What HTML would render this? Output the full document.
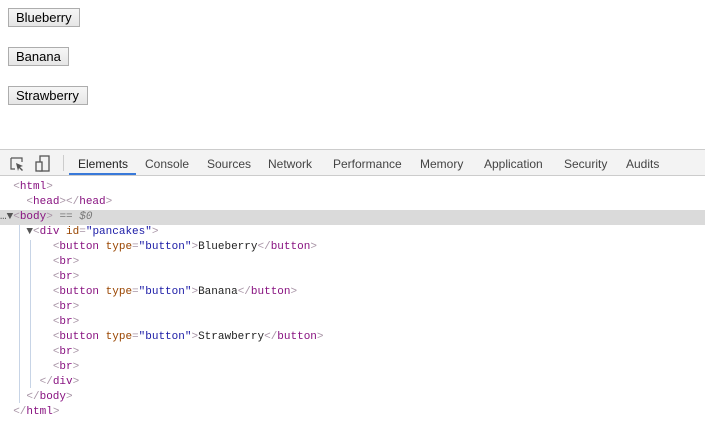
<!DOCTYPE html>
<html><head><style>
body{margin:0;width:705px;height:431px;overflow:hidden;background:#fff;font-family:"Liberation Sans",sans-serif;position:relative}
.b{position:absolute;left:8px;height:19px;box-sizing:border-box;border:1px solid #adadad;background:linear-gradient(#f6f6f6,#e6e6e6);font-size:13px;line-height:17px;padding:0 7px;color:#000}
.tb{position:absolute;left:0;top:149px;width:705px;height:27px;border-top:1px solid #ccc;border-bottom:1px solid #ccc;background:#f3f3f3;box-sizing:border-box}
.tab{position:absolute;top:7px;font-size:12px;color:#444}
.code{position:absolute;left:0;top:180px;width:705px;font-family:"Liberation Mono",monospace;font-size:11px;line-height:15px;color:#222}
.l{height:15px;white-space:pre;position:relative}
.t{color:#881280}.k{color:#a894a6}.a{color:#994500}.v{color:#1a1aa6}
.sel{background:#dadada}
</style></head><body>
<div class="b" style="top:8px;width:72px">Blueberry</div>
<div class="b" style="top:47px;width:61px">Banana</div>
<div class="b" style="top:86px;width:80px">Strawberry</div>
<div class="tb">
<svg style="position:absolute;left:9px;top:6px" width="16" height="16"><path d="M2 2h11v4M2 2v11h4" fill="none" stroke="#555" stroke-width="1.2"/><path d="M7 7l7 3-3 1 3 3-1 1-3-3-1 3z" fill="#555"/></svg>
<svg style="position:absolute;left:35px;top:5px" width="16" height="18"><rect x="5" y="1" width="9" height="15" fill="none" stroke="#555" stroke-width="1.3"/><rect x="1" y="7" width="6" height="9" fill="#f3f3f3" stroke="#555" stroke-width="1.3"/></svg>
<div style="position:absolute;left:63px;top:5px;width:1px;height:16px;background:#ccc"></div>
<div style="position:absolute;left:69px;top:23px;width:67px;height:2px;background:#3879d9"></div>
<span class="tab" style="left:78px;color:#222">Elements</span>
<span class="tab" style="left:145px">Console</span>
<span class="tab" style="left:207px">Sources</span>
<span class="tab" style="left:268px">Network</span>
<span class="tab" style="left:333px">Performance</span>
<span class="tab" style="left:420px">Memory</span>
<span class="tab" style="left:484px">Application</span>
<span class="tab" style="left:564px">Security</span>
<span class="tab" style="left:626px">Audits</span>
</div>
<div style="position:absolute;left:19px;top:225px;width:1px;height:178px;background:#c7d4e6"></div>
<div style="position:absolute;left:30px;top:240px;width:1px;height:148px;background:#c7d4e6"></div>
<div class="code">
<div class="l">  <span class="k">&lt;</span><span class="t">html</span><span class="k">&gt;</span></div>
<div class="l">    <span class="k">&lt;</span><span class="t">head</span><span class="k">&gt;&lt;/</span><span class="t">head</span><span class="k">&gt;</span></div>
<div class="l sel"><span style="color:#555">…▼</span><span class="k">&lt;</span><span class="t">body</span><span class="k">&gt;</span> <span style="color:#777">== <i>$0</i></span></div>
<div class="l">    <span style="color:#555">▼</span><span class="k">&lt;</span><span class="t">div </span><span class="a">id</span><span class="k">=</span><span class="v">"pancakes"</span><span class="k">&gt;</span></div>
<div class="l">        <span class="k">&lt;</span><span class="t">button </span><span class="a">type</span><span class="k">=</span><span class="v">"button"</span><span class="k">&gt;</span>Blueberry<span class="k">&lt;/</span><span class="t">button</span><span class="k">&gt;</span></div>
<div class="l">        <span class="k">&lt;</span><span class="t">br</span><span class="k">&gt;</span></div>
<div class="l">        <span class="k">&lt;</span><span class="t">br</span><span class="k">&gt;</span></div>
<div class="l">        <span class="k">&lt;</span><span class="t">button </span><span class="a">type</span><span class="k">=</span><span class="v">"button"</span><span class="k">&gt;</span>Banana<span class="k">&lt;/</span><span class="t">button</span><span class="k">&gt;</span></div>
<div class="l">        <span class="k">&lt;</span><span class="t">br</span><span class="k">&gt;</span></div>
<div class="l">        <span class="k">&lt;</span><span class="t">br</span><span class="k">&gt;</span></div>
<div class="l">        <span class="k">&lt;</span><span class="t">button </span><span class="a">type</span><span class="k">=</span><span class="v">"button"</span><span class="k">&gt;</span>Strawberry<span class="k">&lt;/</span><span class="t">button</span><span class="k">&gt;</span></div>
<div class="l">        <span class="k">&lt;</span><span class="t">br</span><span class="k">&gt;</span></div>
<div class="l">        <span class="k">&lt;</span><span class="t">br</span><span class="k">&gt;</span></div>
<div class="l">      <span class="k">&lt;/</span><span class="t">div</span><span class="k">&gt;</span></div>
<div class="l">    <span class="k">&lt;/</span><span class="t">body</span><span class="k">&gt;</span></div>
<div class="l">  <span class="k">&lt;/</span><span class="t">html</span><span class="k">&gt;</span></div>
</div>
</body></html>
